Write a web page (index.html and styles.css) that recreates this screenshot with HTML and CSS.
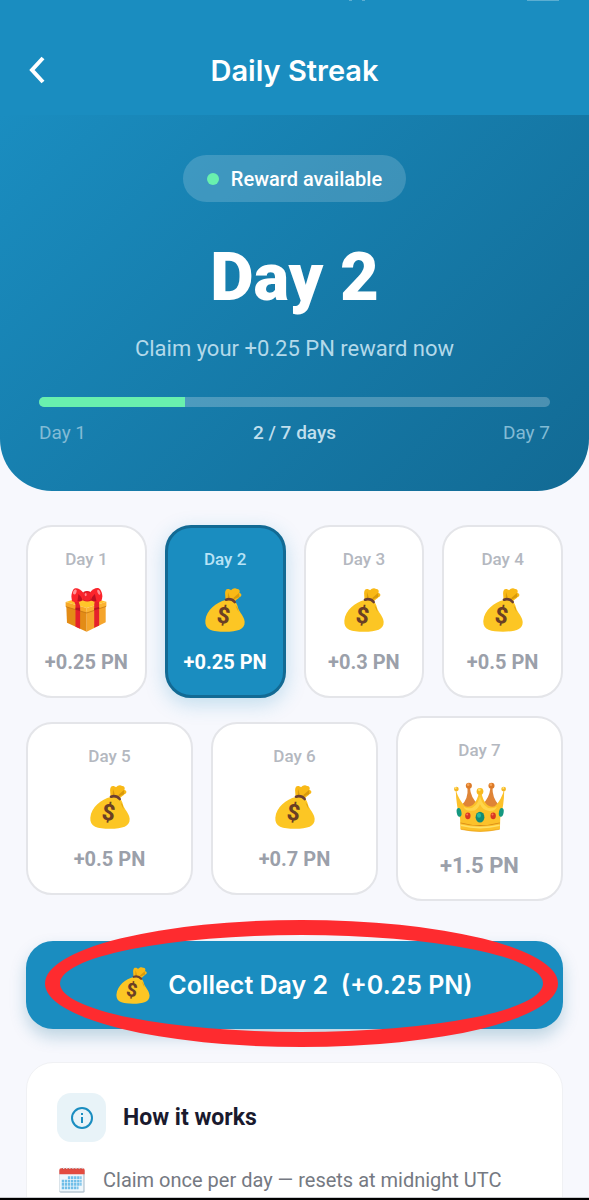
FILE: index.html
```
<!DOCTYPE html>
<html lang="en">
<head>
    <meta charset="UTF-8">
    <meta name="viewport" content="width=device-width, initial-scale=1.0">
    <title>Daily Streak</title>
    <link rel="stylesheet" href="styles.css">
</head>
<body>
    <!-- Shared icons -->
    <svg class="sprite" aria-hidden="true">
        <symbol id="bag" viewBox="0 0 120 132">
            <path fill="#f9b916" d="M61 38 C63 26 57 14 63 5 C68 1 75 4 78 7 C83 0 92-1 96 3 C103 2 106 9 103 14 C111 17 111 24 104 27 C98 33 92 37 88 42Z"/>
            <path fill="#d99a0c" d="M69 12 l5 15 -6 8z M102 15 L84 31 88 34 103 27z"/>
            <path fill="#fcc624" d="M62 36 C34 43 4 66 1 98 C-1 125 22 131 60 131 C98 131 120 124 119 101 C117 83 103 73 99 59 C97 49 93 43 86 39Z"/>
            <path fill="#e2a20d" d="M91 51 C94 59 98 68 101 73 L98 60Z"/>
            <path fill="none" stroke="#6b3f32" stroke-width="8" stroke-linecap="round" d="M63 35 C72 32 83 35 89 42"/>
            <text x="56" y="106" class="bag-sign" transform="rotate(8 56 82)">$</text>
        </symbol>
        <symbol id="gift" viewBox="0 0 124 134">
            <path fill="#e38c16" d="M2 54 L64 72 V133 L4 106Z"/>
            <path fill="#f5a52b" d="M64 72 L122 54 V104 L64 133Z"/>
            <path fill="#ffc52d" d="M0 43 L60 24 L124 42 L64 61Z"/>
            <path fill="#f7a928" d="M0 43 L64 61 V76 L0 57Z"/>
            <path fill="#fbb332" d="M64 61 L124 42 V56 L64 76Z"/>
            <path fill="none" stroke="#b9690d" stroke-width="2" d="M1 57 L64 76 L123 56"/>
            <path fill="#e5212b" d="M24 36 L37 33 L44 55 V124 L30 118 V51Z"/>
            <path fill="#e5212b" d="M89 35 L102 38 V114 L87 121 V52Z"/>
            <path fill="#b81423" d="M30 60 H44 V70 L30 66Z M87 68 L102 63 V58 L87 62Z"/>
            <path fill="#ffc629" d="M46 49 L65 42 L84 49 L65 59Z"/>
            <path fill="#d8141e" d="M54 12 Q65 7 76 12 L79 38 Q66 44 53 38Z"/>
            <path fill="#fb242b" d="M55 15 C43 2 31-4 23 5 C17 16 16 29 20 40 Q38 47 52 37Z"/>
            <path fill="#fb242b" d="M73 15 C84 1 99-5 106 5 C113 17 113 29 109 39 Q94 47 77 37Z"/>
            <rect fill="#f5222b" x="53" y="13" width="23" height="26" rx="9"/>
            <path fill="#bd1021" d="M39 18 Q49 27 52 37 Q42 41 36 40Z M89 18 Q78 27 77 37 Q88 42 94 40Z"/>
            <ellipse fill="#ff9297" cx="28" cy="12" rx="5" ry="8" transform="rotate(25 28 12)"/>
            <ellipse fill="#ff9297" cx="101" cy="13" rx="4" ry="8" transform="rotate(-24 101 13)"/>
            <ellipse fill="#ff8b90" cx="61" cy="20" rx="3" ry="5"/>
        </symbol>
        <symbol id="crown" viewBox="0 0 154 146">
            <path fill="#df8436" d="M40 15 Q43 48 22 68 L40 84 L72 65 Q49 47 47 14Z M108 15 Q105 47 83 66 L111 83 L132 66 Q113 46 114 14Z"/>
            <circle fill="#dc7a28" cx="44" cy="10" r="9"/>
            <circle fill="#dc7a28" cx="111" cy="10" r="9"/>
            <circle fill="#f7a455" cx="42" cy="7" r="4"/>
            <circle fill="#f7a455" cx="109" cy="7" r="4"/>
            <path fill="#fcc12a" d="M5 22 Q15 54 33 71 Q63 78 74 30 H81 Q91 78 121 71 Q140 54 149 20 Q148 73 137 105 L136 139 Q77 153 19 139 L18 106 Q7 74 5 22Z"/>
            <path fill="#ffd54a" d="M28 72 Q62 90 77 43 Q92 90 127 72 Q120 88 101 84 Q85 82 77 65 Q67 87 50 84 Q33 85 28 72Z"/>
            <path fill="none" stroke="#d98a17" stroke-width="3" d="M19 120 Q77 136 136 120"/>
            <path fill="none" stroke="#ffe067" stroke-width="5" d="M20 127 Q77 141 135 127"/>
            <path fill="none" stroke="#e99b14" stroke-width="2" d="M20 139 Q77 151 135 139"/>
            <circle fill="#f8b91f" cx="77" cy="27" r="10"/>
            <circle fill="#f5b726" cx="7" cy="20" r="7"/>
            <circle fill="#f5b726" cx="147" cy="20" r="7"/>
            <circle fill="#ffe372" cx="75" cy="22" r="4"/>
            <circle fill="#ffe372" cx="5" cy="17" r="3"/>
            <circle fill="#ffe372" cx="146" cy="17" r="3"/>
            <ellipse fill="#128b76" cx="77" cy="103" rx="13" ry="16"/>
            <ellipse fill="#2ab99d" cx="74" cy="98" rx="6" ry="7"/>
            <ellipse fill="#d93821" cx="41" cy="99" rx="8" ry="10"/>
            <ellipse fill="#d93821" cx="116" cy="99" rx="8" ry="10"/>
            <circle fill="#ff7854" cx="39" cy="95" r="3"/>
            <circle fill="#ff7854" cx="114" cy="95" r="3"/>
            <ellipse fill="#159880" cx="15" cy="89" rx="7" ry="13" transform="rotate(-10 15 89)"/>
            <ellipse fill="#159880" cx="140" cy="89" rx="7" ry="13" transform="rotate(10 140 89)"/>
        </symbol>
        <symbol id="calendar" viewBox="0 0 76 76">
            <rect fill="#b9c8d4" x="1" y="8" width="74" height="67" rx="4"/>
            <rect fill="#eff7fc" x="2" y="15" width="69" height="56" rx="2"/>
            <path fill="#e34b40" d="M1 21 V9 Q1 4 6 4 H70 Q75 4 75 9 V21Z"/>
            <path fill="none" stroke="#7f4c4c" stroke-width="3" stroke-dasharray="3 6" d="M10 5 H70"/>
            <path fill="none" stroke="#e2e8ed" stroke-width="5" stroke-dasharray="3 6" d="M12 3 H70"/>
            <path fill="none" stroke="#70bee8" stroke-width="8" stroke-dasharray="7 2" d="M26 31 H66 M8 41 H66 M8 51 H66 M8 61 H57"/>
        </symbol>
    </svg>

    <div class="app">
        <header class="topbar">
            <div class="status" aria-hidden="true"><i></i><i></i><b></b></div>
            <div class="topbar-row">
                <button class="back" aria-label="Back">
                    <svg viewBox="0 0 16 28"><path d="M14 2 L3 14 L14 26"/></svg>
                </button>
                <h1>Daily Streak</h1>
            </div>
        </header>

        <main>
            <section class="hero">
                <div class="pill"><span class="dot"></span>Reward available</div>
                <h2>Day 2</h2>
                <p class="hero-text">Claim your +0.25 PN reward now</p>
                <div class="progress"><div class="progress-fill" style="width: 28.57%"></div></div>
                <div class="progress-labels">
                    <span>Day 1</span>
                    <strong>2 / 7 days</strong>
                    <span>Day 7</span>
                </div>
            </section>

            <div class="content">
                <ul class="days">
                    <li class="day"><span class="name">Day 1</span><svg class="icon"><use href="#gift"/></svg><span class="amount">+0.25 PN</span></li>
                    <li class="day active"><span class="name">Day 2</span><svg class="icon"><use href="#bag"/></svg><span class="amount">+0.25 PN</span></li>
                    <li class="day"><span class="name">Day 3</span><svg class="icon"><use href="#bag"/></svg><span class="amount">+0.3 PN</span></li>
                    <li class="day"><span class="name">Day 4</span><svg class="icon"><use href="#bag"/></svg><span class="amount">+0.5 PN</span></li>
                </ul>
                <ul class="days">
                    <li class="day"><span class="name">Day 5</span><svg class="icon"><use href="#bag"/></svg><span class="amount">+0.5 PN</span></li>
                    <li class="day"><span class="name">Day 6</span><svg class="icon"><use href="#bag"/></svg><span class="amount">+0.7 PN</span></li>
                    <li class="day big"><span class="name">Day 7</span><svg class="icon"><use href="#crown"/></svg><span class="amount">+1.5 PN</span></li>
                </ul>

                <div class="collect-wrap">
                    <button class="collect">
                        <svg class="collect-icon" aria-hidden="true"><use href="#bag"/></svg>
                        <span>Collect Day 2&nbsp; (+0.25 PN)</span>
                    </button>
                    <div class="ring"></div>
                </div>

                <section class="info">
                    <div class="info-head">
                        <span class="info-badge">
                            <svg viewBox="0 0 24 24"><circle cx="12" cy="12" r="10"/><path d="M12 11 V17 M12 7 V9"/></svg>
                        </span>
                        <h3>How it works</h3>
                    </div>
                    <div class="info-row">
                        <svg class="info-icon" aria-hidden="true"><use href="#calendar"/></svg>
                        <p>Claim once per day — resets at midnight UTC</p>
                    </div>
                </section>
            </div>
        </main>
        <div class="navbar"></div>
    </div>
</body>
</html>
```
FILE: styles.css
```
* {
    box-sizing: border-box;
}
body {
    margin: 0;
    background-color: #f7f8fd;
    font-family: Roboto, sans-serif;
}
h1, h2, h3, p, ul {
    margin: 0;
    padding: 0;
}
button {
    border: none;
    cursor: pointer;
}
.sprite {
    display: none;
}
.bag-sign {
    font: 800 68px Roboto, sans-serif;
    fill: #6b3f25;
    text-anchor: middle;
}
.app {
    display: flex;
    flex-direction: column;
    height: 100vh;
}

/* Top bar */
.topbar {
    background-color: #1a8dc0;
}
.status {
    display: flex;
    justify-content: flex-end;
    gap: 10px;
    height: 25px;
    padding-right: 30px;
}
.status i {
    width: 3px;
    height: 1px;
    background-color: #5baed2;
}
.status b {
    width: 32px;
    height: 1px;
    margin-left: 152px;
    background-color: #5baed2;
}
.topbar-row {
    display: grid;
    grid-template-columns: 48px 1fr 48px;
    align-items: center;
    height: 90px;
    padding: 0 13px;
}
.back {
    display: flex;
    justify-content: center;
    padding: 8px;
    background: none;
}
.back svg {
    width: 16px;
    height: 28px;
    fill: none;
    stroke: #fff;
    stroke-width: 4;
}
h1 {
    color: #fff;
    font-family: Inter, sans-serif;
    font-size: 29px;
    font-weight: 600;
    text-align: center;
}

main {
    flex: 1;
    min-height: 0;
    overflow: hidden;
}
.hero {
    display: flex;
    flex-direction: column;
    align-items: center;
    padding: 40px 39px 46px;
    border-radius: 0 0 52px 52px;
    background: linear-gradient(135deg, #1a8dc0, #126a94);
    color: #fff;
}
.pill {
    display: flex;
    align-items: center;
    gap: 12px;
    height: 47px;
    padding: 0 24px;
    border-radius: 24px;
    background-color: rgba(255, 255, 255, 0.17);
    font-size: 20px;
    font-weight: 500;
}
.dot {
    width: 12px;
    height: 12px;
    border-radius: 50%;
    background-color: #69f0ae;
}
h2 {
    margin-top: 35px;
    font-size: 67px;
    font-weight: 900;
    line-height: 80px;
}
.hero-text {
    margin-top: 18px;
    color: #b3d9ea;
    font-size: 22px;
    line-height: 28px;
}
.progress {
    width: 100%;
    height: 10px;
    margin-top: 34px;
    border-radius: 5px;
    background-color: rgba(255, 255, 255, 0.24);
    overflow: hidden;
}
.progress-fill {
    height: 100%;
    background-color: #69f0ae;
}
.progress-labels {
    display: flex;
    justify-content: space-between;
    width: 100%;
    margin-top: 14px;
    color: #82bbd5;
    font-size: 19px;
    line-height: 24px;
}
.progress-labels strong {
    color: #c0dfed;
    font-weight: 500;
}

/* Days */
.content {
    padding: 34px 26px 0;
}
.days {
    display: grid;
    grid-auto-flow: column;
    grid-auto-columns: minmax(0, 1fr);
    align-items: center;
    gap: 18px;
    margin-bottom: 18px;
    list-style: none;
}
.day {
    display: flex;
    flex-direction: column;
    align-items: center;
    padding: 20px 0;
    border: 2px solid #e4e5e9;
    border-radius: 26px;
    background-color: #fff;
}
.name {
    color: #b4b8c0;
    font-size: 17px;
    font-weight: 500;
    line-height: 24px;
}
.icon {
    width: 44px;
    height: 44px;
    margin: 17px 0;
}
.amount {
    color: #9ba0aa;
    font-size: 20px;
    font-weight: 700;
    line-height: 27px;
}
.active {
    border: 3px solid #126a94;
    padding: 19px 0;
    background-color: #1a8dc0;
    box-shadow: 0 6px 20px rgba(26, 141, 192, 0.25);
}
.active .name {
    color: #b8e3f6;
}
.active .amount {
    color: #fff;
}
.big .icon {
    width: 52px;
    height: 50px;
    margin: 20px 0;
}
.big .amount {
    font-size: 22px;
}

/* Collect */
.collect-wrap {
    position: relative;
    margin-top: 40px;
}
.collect {
    display: flex;
    align-items: center;
    justify-content: center;
    gap: 18px;
    width: 100%;
    height: 88px;
    border-radius: 27px;
    background-color: #1a8dc0;
    box-shadow: 0 8px 16px rgba(18, 106, 148, 0.25);
    color: #fff;
    font-family: Inter, sans-serif;
    font-size: 25px;
    font-weight: 600;
}
.collect-icon {
    width: 34px;
    height: 37px;
}
.ring {
    position: absolute;
    top: -21px;
    right: 5px;
    bottom: -18px;
    left: 19px;
    border: 15px solid #fe2b2f;
    border-radius: 50%;
    pointer-events: none;
}

/* How it works */
.info {
    margin-top: 33px;
    padding: 30px;
    border: 1px solid #f0f1f4;
    border-radius: 27px;
    background-color: #fff;
}
.info-head {
    display: flex;
    align-items: center;
    gap: 17px;
}
.info-badge {
    display: flex;
    align-items: center;
    justify-content: center;
    width: 49px;
    height: 49px;
    border-radius: 14px;
    background-color: #e8f3f8;
}
.info-badge svg {
    width: 24px;
    height: 24px;
    fill: none;
    stroke: #1a8dc0;
    stroke-width: 2;
}
h3 {
    color: #1a1a2e;
    font-size: 23px;
    font-weight: 700;
}
.info-row {
    display: flex;
    align-items: center;
    gap: 18px;
    margin-top: 24px;
    padding-left: 2px;
}
.info-icon {
    width: 26px;
    height: 26px;
}
.info-row p {
    color: #757982;
    font-size: 20px;
    line-height: 28px;
}
.navbar {
    height: 3px;
    border-top: 1px solid #c8c9cd;
    background-color: #000;
}
```
